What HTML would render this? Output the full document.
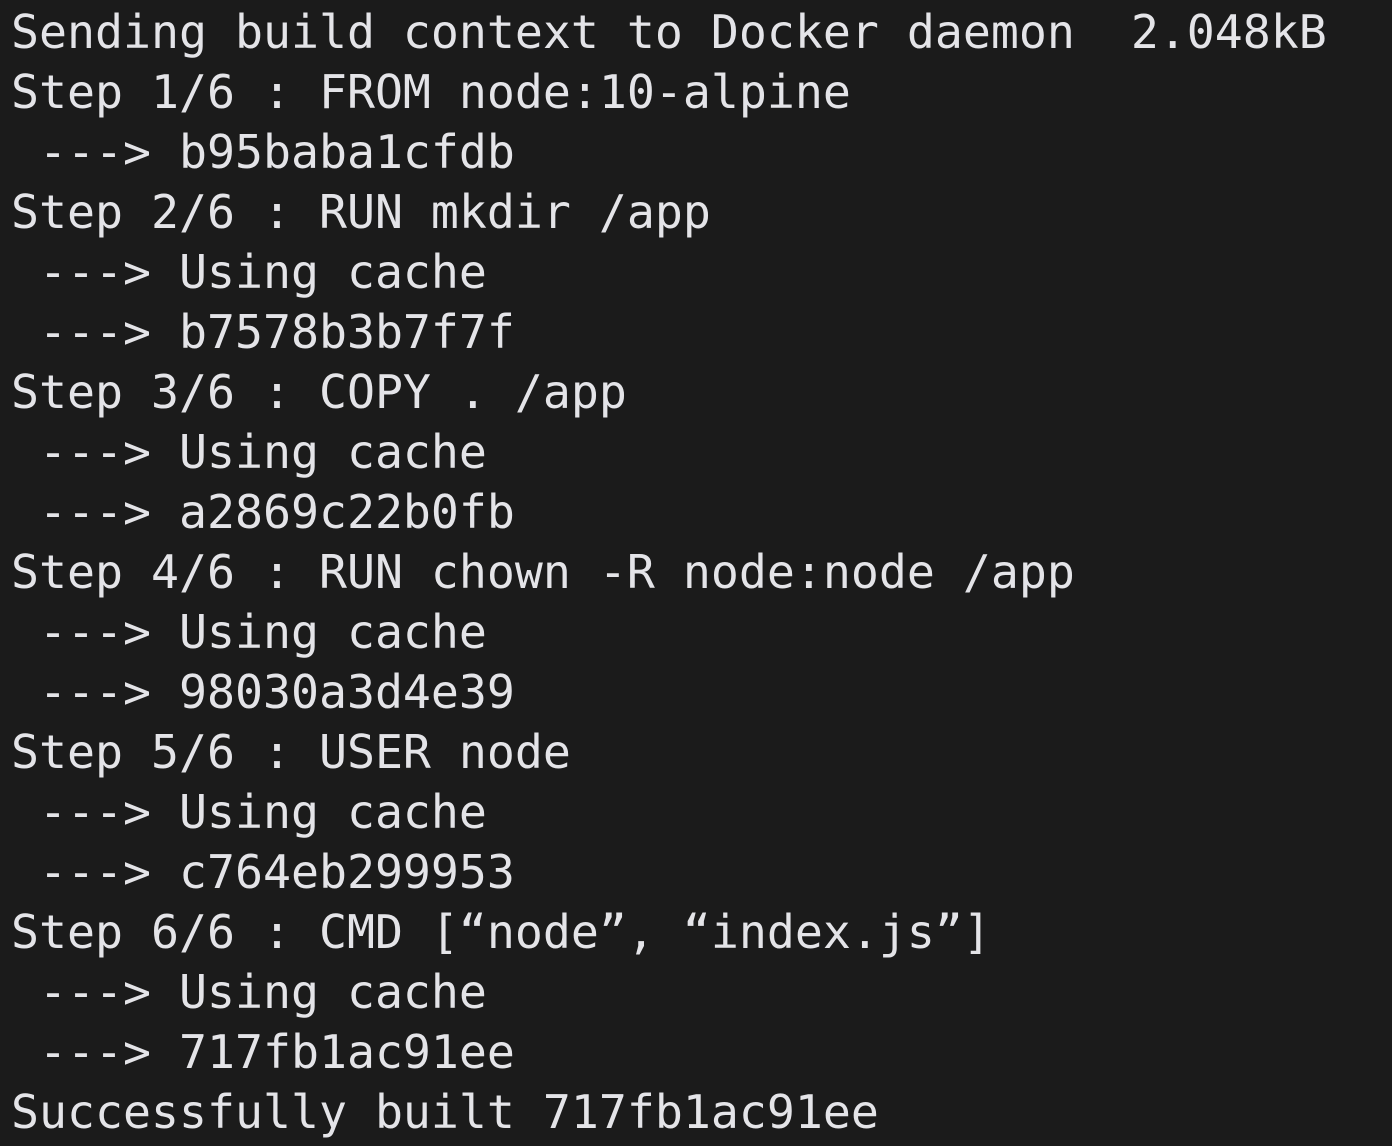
<!DOCTYPE html>
<html><head><meta charset="utf-8"><style>
html,body{margin:0;padding:0;background:#1b1b1b;width:1392px;height:1146px;overflow:hidden}
pre{margin:0;padding:2px 0 0 11px;font-family:"DejaVu Sans Mono","Liberation Mono",monospace;font-size:46.5px;line-height:60px;color:#e4e4e8;white-space:pre}
</style></head><body><pre>Sending build context to Docker daemon  2.048kB
Step 1/6 : FROM node:10-alpine
 ---&gt; b95baba1cfdb
Step 2/6 : RUN mkdir /app
 ---&gt; Using cache
 ---&gt; b7578b3b7f7f
Step 3/6 : COPY . /app
 ---&gt; Using cache
 ---&gt; a2869c22b0fb
Step 4/6 : RUN chown -R node:node /app
 ---&gt; Using cache
 ---&gt; 98030a3d4e39
Step 5/6 : USER node
 ---&gt; Using cache
 ---&gt; c764eb299953
Step 6/6 : CMD [“node”, “index.js”]
 ---&gt; Using cache
 ---&gt; 717fb1ac91ee
Successfully built 717fb1ac91ee</pre></body></html>
